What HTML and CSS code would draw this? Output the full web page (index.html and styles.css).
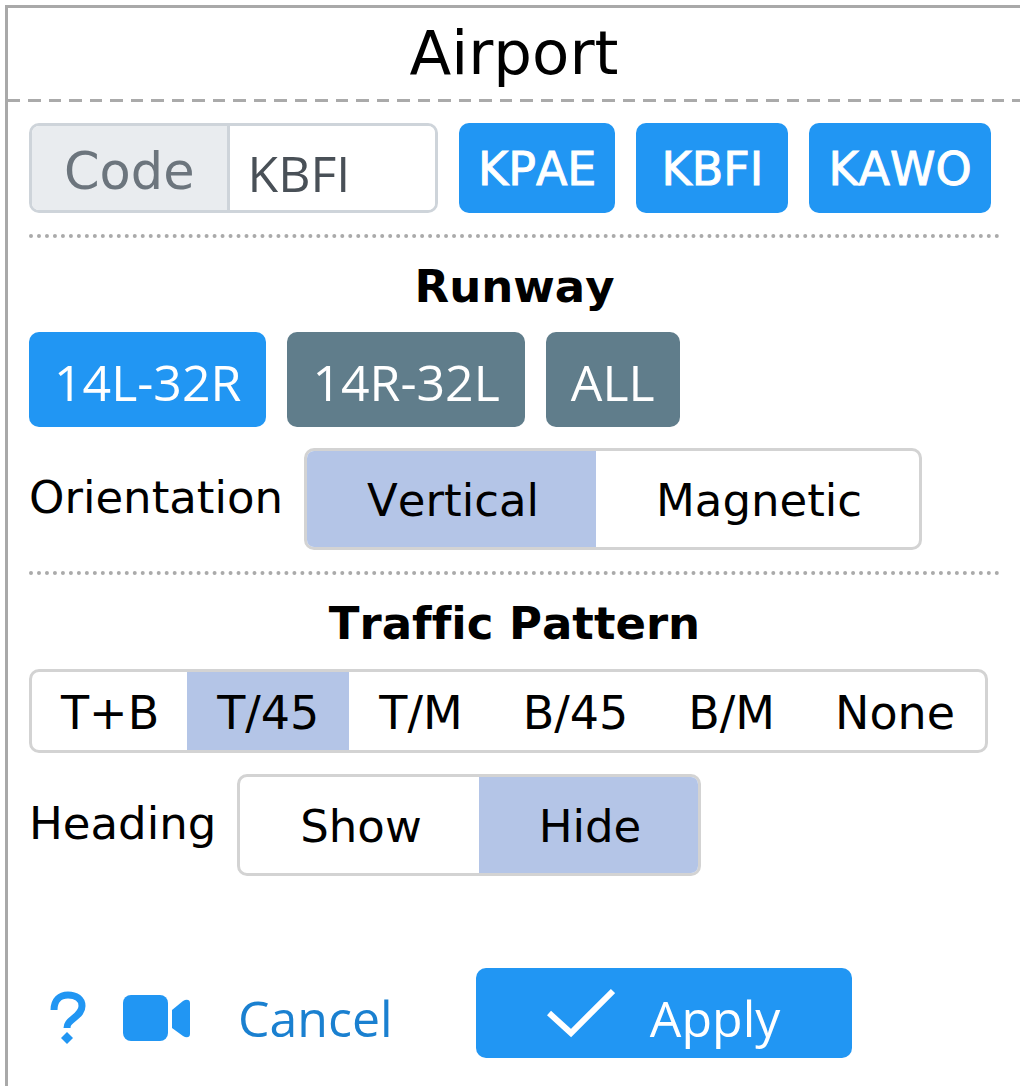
FILE: index.html
```html
<!DOCTYPE html>
<html lang="en">
<head>
    <meta charset="UTF-8">
    <meta name="viewport" content="width=device-width, initial-scale=1.0">
    <title>Airport</title>
    <link rel="stylesheet" href="styles.css">
</head>
<body>
    <form class="dialog">
        <h1 class="title">Airport</h1>
        <div class="content">
            <div class="row">
                <div class="input-group">
                    <label class="addon" for="code">Code</label>
                    <input class="code" id="code" type="text" value="KBFI">
                </div>
                <button type="button" class="btn airport">KPAE</button>
                <button type="button" class="btn airport">KBFI</button>
                <button type="button" class="btn airport">KAWO</button>
            </div>
            <hr class="divider">

            <h2 class="heading">Runway</h2>
            <div class="row">
                <button type="button" class="btn runway">14L-32R</button>
                <button type="button" class="btn runway off">14R-32L</button>
                <button type="button" class="btn runway off">ALL</button>
            </div>
            <div class="row">
                <span class="label" id="orientation">Orientation</span>
                <div class="segment wide" role="radiogroup" aria-labelledby="orientation">
                    <label class="option"><input type="radio" name="orientation" checked>Vertical</label>
                    <label class="option"><input type="radio" name="orientation">Magnetic</label>
                </div>
            </div>
            <hr class="divider">

            <h2 class="heading" id="pattern">Traffic Pattern</h2>
            <div class="row">
                <div class="segment" role="radiogroup" aria-labelledby="pattern">
                    <label class="option"><input type="radio" name="pattern">T+B</label>
                    <label class="option"><input type="radio" name="pattern" checked>T/45</label>
                    <label class="option"><input type="radio" name="pattern">T/M</label>
                    <label class="option"><input type="radio" name="pattern">B/45</label>
                    <label class="option"><input type="radio" name="pattern">B/M</label>
                    <label class="option"><input type="radio" name="pattern">None</label>
                </div>
            </div>
            <div class="row">
                <span class="label" id="heading">Heading</span>
                <div class="segment wide" role="radiogroup" aria-labelledby="heading">
                    <label class="option"><input type="radio" name="heading">Show</label>
                    <label class="option"><input type="radio" name="heading" checked>Hide</label>
                </div>
            </div>

            <div class="footer">
                <button type="button" class="icon-btn" aria-label="Help">
                    <svg width="36" height="54" viewBox="0 0 36 54">
                        <path d="M4 19C4 9 10 4 18 4s14 4 14 11c0 5-3 8-8 12-5 4-7 6-7 10" fill="none" stroke="#2196f3" stroke-width="7"/>
                        <path d="M17 41l6 6-6 6-6-6z" fill="#2196f3"/>
                    </svg>
                </button>
                <button type="button" class="icon-btn" aria-label="Video">
                    <svg width="68" height="54" viewBox="0 0 68 54">
                        <rect x="0" y="4" width="45" height="46" rx="8" fill="#2196f3"/>
                        <path d="M49 19l11-9c3-2 7-2 7 2v31c0 4-4 4-7 2l-11-8z" fill="#2196f3"/>
                    </svg>
                </button>
                <button type="button" class="cancel">Cancel</button>
                <button type="submit" class="btn apply">
                    <svg width="68" height="50" viewBox="0 0 68 50">
                        <path d="M2 25l22 20L66 3" fill="none" stroke="#fff" stroke-width="6"/>
                    </svg>
                    <span class="apply-text">Apply</span>
                </button>
            </div>
        </div>
    </form>
</body>
</html>
```

FILE: styles.css
```css
*{
    box-sizing: border-box;
}
body{
    margin: 0;
    padding: 5px 0 0 5px;
    background-color: white;
    color: black;
    font-family: "DejaVu Sans", Verdana, sans-serif;
    font-size: 45px;
    font-kerning: none;
    font-variant-ligatures: none;
}
button, input{
    font-family: inherit;
    font-size: inherit;
    font-kerning: inherit;
}
button{
    padding: 0;
    border: none;
    background: none;
    cursor: pointer;
}
svg{
    display: block;
}
.dialog{
    min-height: calc(100vh - 5px);
    border-top: 3px solid #a9a9a9;
    border-left: 3px solid #a9a9a9;
}
.title{
    margin: 0;
    padding-bottom: 4px;
    font-size: 61px;
    font-weight: normal;
    line-height: 90px;
    text-align: center;
    /* long dashes, two per tile */
    background: repeating-linear-gradient(90deg, #aaa 0 12px, white 12px 20px, #aaa 20px 33px, white 33px 41px) bottom / 100% 3px no-repeat;
}
.content{
    display: flex;
    flex-direction: column;
    gap: 21px;
    padding: 21px 20px 20px 21px;
}
.row{
    display: flex;
    align-items: center;
    gap: 21px;
}
.divider{
    width: 100%;
    margin: 0;
    border: none;
    border-top: 4px dotted #aaa;
}
.heading{
    margin: 0;
    padding-top: 4px;
    font-size: 45px;
    line-height: 48px;
    text-align: center;
}
.input-group{
    display: flex;
    width: 409px;
    height: 90px;
    border: 3px solid #ced4da;
    border-radius: 10px;
    overflow: hidden;
}
.addon{
    padding: 8px 32px 0;
    border-right: 3px solid #ced4da;
    background-color: #e9ecef;
    color: #6c757d;
    font-size: 51px;
    line-height: 76px;
}
.code{
    flex: 1;
    min-width: 0;
    padding: 10px 0 0 18px;
    border: none;
    outline: none;
    color: #495057;
    font-family: "Open Sans", sans-serif;
    font-size: 50px;
}
.btn{
    border-radius: 10px;
    background-color: #2196f3;
    color: white;
}
.airport{
    height: 90px;
    min-width: 152px;
    padding: 2px 19px 0;
    font-size: 46px;
    -webkit-text-stroke: 1px white;
}
.runway{
    height: 95px;
    padding: 5px 25px 0;
    font-family: "Open Sans", sans-serif;
    font-size: 50px;
}
.off{
    background-color: #607d8b;
}
.label{
    padding-bottom: 4px;
}
.segment{
    display: flex;
    border: 3px solid #d3d3d3;
    border-radius: 10px;
    overflow: hidden;
}
.option{
    padding: 4px 30px 0;
    font-size: 46px;
    line-height: 74px;
    cursor: pointer;
}
.option:first-child{
    padding-left: 29px;
    padding-right: 28px;
}
.option input{
    position: absolute;
    opacity: 0;
}
.option:has(input:checked){
    background-color: #b4c5e7;
}
.wide .option{
    padding: 4px 57px 0 60px;
    font-size: 45px;
    line-height: 92px;
}
.footer{
    display: flex;
    align-items: center;
    margin-top: 71px;
    padding-left: 21px;
}
.icon-btn{
    margin-right: 37px;
    padding-top: 10px;
}
.cancel{
    margin: 0 83px 0 10px;
    padding-top: 10px;
    color: #1a80d0;
    font-family: "Open Sans", sans-serif;
    font-size: 50px;
    line-height: 80px;
}
.apply{
    display: flex;
    align-items: center;
    justify-content: center;
    gap: 35px;
    width: 376px;
    height: 90px;
    font-family: "Open Sans", sans-serif;
    font-size: 50px;
}
.apply-text{
    padding-top: 10px;
    line-height: 80px;
}
```
